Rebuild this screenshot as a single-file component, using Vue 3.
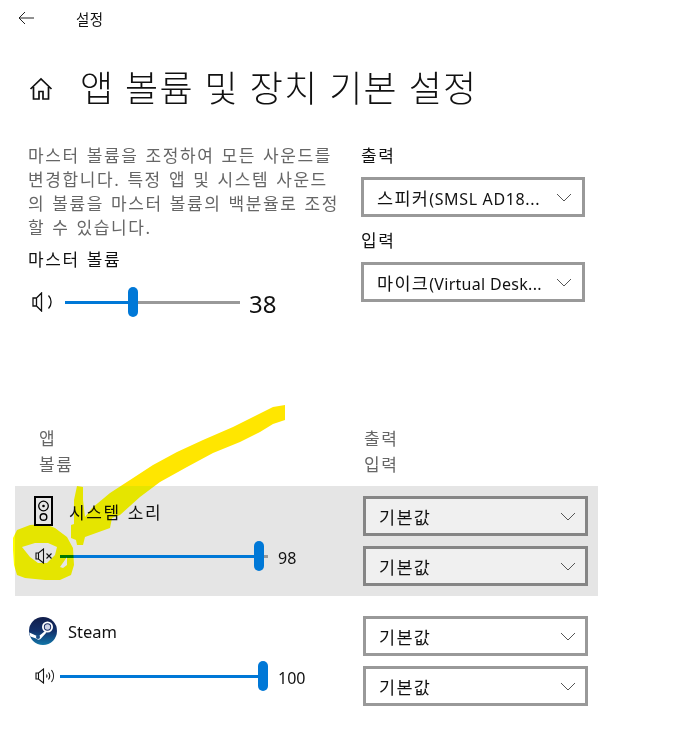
<script setup>
const apps = [
  { name: '시스템 소리', value: 98, thumb: 194, rest: 4, active: true, icon: 'system' },
  { name: 'Steam', value: 100, thumb: 198, rest: 0, active: false, icon: 'steam' }
]
const arrow = 'M285 405 273 407 257 415 233 427 203 440 177 452 153 465 130 480 110 493 92 508 85 517 83 500 83 487 77 486 74 500 74 524 71 525 71 538 76 540 77 545 83 545 85 537 110 528 112 518 120 515 140 497 160 482 187 467 213 453 240 442 260 432 273 424 285 420Z'
const blob = 'M13 538 17 530 30 525 45 524 55 528 67 537 73 548 74 565 71 575 60 580 45 580 25 578 17 575 14 565 13 550ZM22 547 35 543 48 543 57 547 55 555 47 563 38 563 30 557ZM60 567 67 557 67 565 63 568Z'
</script>

<template>
  <div class="page">
    <header class="topbar">
      <svg class="back" width="16" height="14" viewBox="0 0 16 14"><path d="M7 1 1 7l6 6M1 7h15" fill="none" stroke="#222" stroke-width="1"/></svg>
      <span class="crumb">설정</span>
    </header>

    <div class="title-row">
      <svg class="home" width="24" height="24" viewBox="0 0 24 24"><path d="M1.500 12 12 2l10.500 10M4.500 10v12h5.500v-7.500h4V22h5.500V10" fill="none" stroke="#111" stroke-width="1.700"/></svg>
      <h1>앱 볼륨 및 장치 기본 설정</h1>
    </div>

    <section class="master">
      <div class="master-left">
        <p class="desc">마스터 볼륨을 조정하여 모든 사운드를<br>변경합니다. 특정 앱 및 시스템 사운드<br>의 볼륨을 마스터 볼륨의 백분율로 조정<br>할 수 있습니다.</p>
        <div class="master-label">마스터 볼륨</div>
        <div class="master-slider">
          <svg width="21" height="20" viewBox="0 0 21 20"><path d="M1 6h3.500L9.500 1v18L4.500 14H1zM4.500 6v8M16.500 3.500a9.500 9.500 0 0 1 0 13" fill="none" stroke="#111" stroke-width="1.300"/></svg>
          <div class="track master-track">
            <div class="fill master-fill"></div>
            <div class="thumb"></div>
            <div class="rest"></div>
          </div>
          <span class="master-value">38</span>
        </div>
      </div>
      <div class="master-right">
        <div class="sel-label">출력</div>
        <div class="select plain"><span><span class="ko">스피커</span><span class="lat">(SMSL AD18...</span></span><svg width="16" height="9" viewBox="0 0 16 9"><path d="M1 1l7 7 7-7" fill="none" stroke="#555"/></svg></div>
        <div class="sel-label second">입력</div>
        <div class="select plain"><span><span class="ko">마이크</span><span class="lat wide">(Virtual Desk...</span></span><svg width="16" height="9" viewBox="0 0 16 9"><path d="M1 1l7 7 7-7" fill="none" stroke="#555"/></svg></div>
      </div>
    </section>

    <div class="col-heads">
      <div class="head-left">앱<br>볼륨</div>
      <div class="head-right">출력<br>입력</div>
    </div>

    <div v-for="app in apps" :key="app.name" class="app-row" :class="{ active: app.active }">
      <div class="app-left">
        <div class="app-name" :class="app.icon">
          <svg v-if="app.icon === 'system'" class="sys-icon" width="19" height="30" viewBox="0 0 19 30">
            <rect x="1" y="1" width="17" height="28" fill="none" stroke="#000" stroke-width="2"/>
            <circle cx="9.500" cy="10" r="4.800" fill="none" stroke="#000" stroke-width="1.300"/>
            <circle cx="9.500" cy="10" r="1.300" fill="#000"/>
            <circle cx="9.500" cy="21" r="3.300" fill="none" stroke="#000" stroke-width="1.400"/>
          </svg>
          <svg v-else class="steam-icon" width="28" height="28" viewBox="0 0 28 28">
            <defs>
              <linearGradient id="steamGrad" x1="0" y1="0" x2="0" y2="1">
                <stop offset="0" stop-color="#111d4a"/>
                <stop offset="0.5" stop-color="#12306a"/>
                <stop offset="1" stop-color="#1276a8"/>
              </linearGradient>
            </defs>
            <circle cx="14" cy="14" r="14" fill="url(#steamGrad)"/>
            <path d="M0.300 15.500 8 19l2 0 5.500-4.500 2 1-6 6.500q-2.500 1.500-4.500-.5L1.300 19.500z" fill="#fff"/>
            <circle cx="18.500" cy="10" r="5.500" fill="#fff"/>
            <circle cx="18.500" cy="10" r="3.700" fill="#1a2c63"/>
            <circle cx="18.500" cy="10" r="2.700" fill="#cfd3e6"/>
            <circle cx="9" cy="20" r="2" fill="#1b4e86"/>
          </svg>
          <span>{{ app.name }}</span>
        </div>
        <div class="app-slider">
          <svg v-if="app.icon === 'system'" width="20" height="16" viewBox="0 0 20 16"><path d="M1 5h2.500L8.500 1v14L3.500 11H1zM3.500 5v6" fill="none" stroke="#111" stroke-width="1.100"/><path d="M11.500 5.500l5 5M16.500 5.500l-5 5" fill="none" stroke="#111" stroke-width="1.100"/></svg>
          <svg v-else width="20" height="16" viewBox="0 0 20 16"><path d="M1 5h2.500L8.500 1v14L3.500 11H1zM3.500 5v6M11.500 6.500a3 3 0 0 1 0 3M13.500 4.500a6 6 0 0 1 0 7M16.500 2a10 10 0 0 1 0 12" fill="none" stroke="#111" stroke-width="1.100"/></svg>
          <div class="track app-track">
            <div class="fill" :style="{ width: app.thumb + 'px' }"></div>
            <div class="thumb"></div>
            <div v-if="app.rest" class="rest"></div>
          </div>
          <span class="app-value">{{ app.value }}</span>
        </div>
      </div>
      <div class="app-right">
        <div class="select app-select"><span class="ko">기본값</span><svg width="16" height="9" viewBox="0 0 16 9"><path d="M1 1l7 7 7-7" fill="none" stroke="#555"/></svg></div>
        <div class="select app-select"><span class="ko">기본값</span><svg width="16" height="9" viewBox="0 0 16 9"><path d="M1 1l7 7 7-7" fill="none" stroke="#555"/></svg></div>
      </div>
    </div>

    <svg class="marker" width="692" height="742" viewBox="0 0 692 742">
      <defs>
        <clipPath id="overWhite"><rect x="0" y="0" width="692" height="486"/></clipPath>
        <clipPath id="overGrey"><rect x="0" y="486" width="692" height="256"/></clipPath>
      </defs>
      <path fill="#ffe600" clip-path="url(#overWhite)" :d="arrow"/>
      <path fill="#ffff00" clip-path="url(#overGrey)" :d="arrow"/>
      <path fill="#ffff00" fill-rule="evenodd" :d="blob"/>
    </svg>
  </div>
</template>

<style>
html, body { margin: 0; background: #fff; }
</style>

<style scoped>
.page {
  position: relative;
  width: 692px;
  height: 742px;
  overflow: hidden;
  background: #fff;
  color: #111;
  font-family: "Noto Sans", "Noto Sans CJK KR", sans-serif;
}
.topbar {
  display: flex;
  align-items: center;
  height: 36px;
  padding-left: 18px;
}
.crumb {
  margin-left: 42px;
  font-size: 14.500px;
  letter-spacing: 0.5px;
}
.title-row {
  display: flex;
  align-items: center;
  height: 60px;
  margin-top: 23px;
  padding-left: 29px;
}
h1 {
  margin: 0 0 0 27px;
  font-size: 36px;
  font-weight: 300;
  letter-spacing: 1.300px;
  line-height: 60px;
  white-space: nowrap;
}
.master {
  display: flex;
  margin-top: 25px;
  padding-left: 28px;
}
.master-left { width: 333px; }
.desc {
  margin: 0;
  color: #666;
  font-size: 17px;
  letter-spacing: 1.600px;
  word-spacing: 1px;
  line-height: 24px;
  white-space: nowrap;
}
.master-label {
  margin-top: 8px;
  font-size: 17px;
  letter-spacing: 1.600px;
  word-spacing: 1px;
  line-height: 24px;
}
.master-slider {
  display: flex;
  align-items: center;
  height: 30px;
  margin-top: 15px;
  padding-left: 4px;
}
.master-slider .track { margin-left: 12px; }
.track {
  position: relative;
  display: flex;
  align-items: center;
  height: 30px;
}
.master-track { width: 175px; }
.master-fill { width: 63px; }
.app-track { width: 208px; }
.fill { height: 3px; background: #0078d7; }
.thumb {
  flex: none;
  width: 10px;
  height: 30px;
  border-radius: 5px;
  background: #0078d7;
}
.rest { flex: 1; height: 3px; background: #999; }
.master-value {
  margin-left: 9px;
  padding-top: 3px;
  font-size: 24px;
  line-height: 30px;
}
.master-right { width: 224px; }
.sel-label {
  font-size: 17px;
  letter-spacing: 1.600px;
  line-height: 24px;
}
.sel-label.second { margin-top: 12px; }
.select {
  box-sizing: border-box;
  display: flex;
  align-items: center;
  justify-content: space-between;
  height: 40px;
  margin-top: 9px;
  padding: 0 10px 0 13px;
  border: 3px solid #999;
  font-size: 16px;
  white-space: nowrap;
}
.ko { font-size: 17.500px; letter-spacing: 1.300px; }
.lat { letter-spacing: 0.65px; }
.lat.wide { letter-spacing: 0.3px; }
.col-heads {
  display: flex;
  margin-top: 109px;
  color: #666;
  font-size: 17px;
  letter-spacing: 1.600px;
  line-height: 26px;
}
.head-left { width: 364px; padding-left: 39px; box-sizing: border-box; }
.app-row {
  display: flex;
  box-sizing: border-box;
  width: 583px;
  height: 110px;
  margin: 8px 0 0 15px;
  padding-top: 10px;
}
.app-row + .app-row { margin-top: 10px; }
.app-row.active { background: #e5e5e5; }
.app-left { width: 348px; }
.app-name {
  display: flex;
  align-items: center;
  height: 30px;
  font-size: 16.500px;
}
.app-name.system span { font-size: 17px; letter-spacing: 1.600px; word-spacing: 1px; }
.app-name.system { padding-left: 19px; }
.app-name.system span { margin-left: 16px; }
.app-name.steam { padding-left: 14px; }
.app-name.steam span { margin-left: 11px; }
.app-slider {
  display: flex;
  align-items: center;
  height: 30px;
  margin-top: 15px;
  padding-left: 20px;
}
.app-track { margin-left: 5px; }
.app-value {
  margin-left: 10px;
  padding-top: 3px;
  font-size: 16px;
}
.app-right { width: 225px; }
.select.app-select { margin-top: 0; padding-right: 9px; background: #fff; border-color: #999; }
.select.app-select + .select.app-select { margin-top: 10px; }
.active .select.app-select { background: #f0f0f0; border-color: #858585; }
.marker {
  position: absolute;
  left: 0;
  top: 0;
  mix-blend-mode: multiply;
  pointer-events: none;
}
</style>
